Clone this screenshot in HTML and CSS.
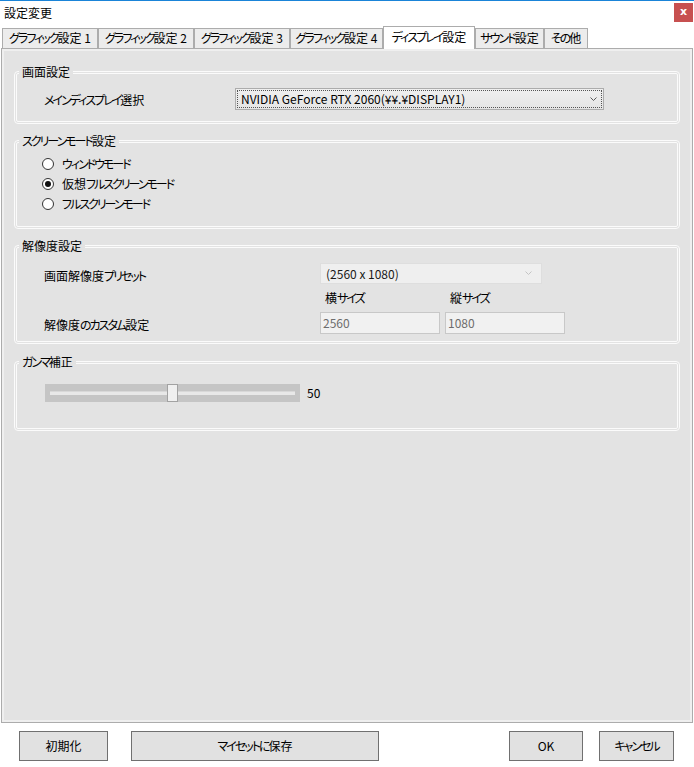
FILE: index.html
```html
<!DOCTYPE html>
<html lang="ja">
<head>
<meta charset="utf-8">
<title>設定変更</title>
<link rel="stylesheet" href="styles.css">
</head>
<body>
<div class="window">
  <div class="titlebar">
    <span class="title">設定変更</span>
    <span class="close">x</span>
  </div>
  <div class="tabs">
    <div class="tab w1"><span class="k">グラフィック</span>設定 1</div>
    <div class="tab w1"><span class="k">グラフィック</span>設定 2</div>
    <div class="tab w1"><span class="k">グラフィック</span>設定 3</div>
    <div class="tab w4"><span class="k">グラフィック</span>設定 4</div>
    <div class="tab active"><span class="k">ディスプレイ</span>設定</div>
    <div class="tab w6"><span class="k">サウンド</span>設定</div>
    <div class="tab w7"><span class="k">その</span>他</div>
  </div>
  <div class="panel">
    <fieldset class="group">
      <legend>画面設定</legend>
      <div class="body b1">
        <span class="label l1"><span class="k">メインディスプレイ</span>選択</span>
        <div class="select focus">
          <span class="focusring">NVIDIA GeForce RTX 2060(¥¥.¥DISPLAY1)</span>
          <svg class="chev" width="7" height="4" viewBox="0 0 7 4"><polyline points="0.5,0.5 3.5,3.5 6.5,0.5" fill="none" stroke="#5a5a5a" stroke-width="1"/></svg>
        </div>
      </div>
    </fieldset>
    <fieldset class="group g2">
      <legend><span class="k">スクリーンモード</span>設定</legend>
      <div class="body b2">
        <div class="radio"><span class="dot"></span><span class="k">ウィンドウモード</span></div>
        <div class="radio"><span class="dot checked"></span><span>仮想<span class="k">フルスクリーンモード</span></span></div>
        <div class="radio"><span class="dot"></span><span class="k">フルスクリーンモード</span></div>
      </div>
    </fieldset>
    <fieldset class="group g3">
      <legend>解像度設定</legend>
      <div class="body b3">
        <span class="label r1">画面解像度<span class="k">プリセット</span></span>
        <div class="select disabled">
          <span class="seltext">(2560 x 1080)</span>
          <svg class="chev" width="7" height="4" viewBox="0 0 7 4"><polyline points="0.5,0.5 3.5,3.5 6.5,0.5" fill="none" stroke="#c4c4c4" stroke-width="1"/></svg>
        </div>
        <span class="sizelabel c2">横<span class="k">サイズ</span></span>
        <span class="sizelabel c3">縦<span class="k">サイズ</span></span>
        <span class="label r3">解像度<span class="k">のカスタム</span>設定</span>
        <div class="input c2">2560</div>
        <div class="input c3">1080</div>
      </div>
    </fieldset>
    <fieldset class="group g4">
      <legend><span class="k">ガンマ</span>補正</legend>
      <div class="body b4">
        <div class="slider">
          <div class="track"></div>
          <div class="thumb"></div>
        </div>
        <span class="value">50</span>
      </div>
    </fieldset>
  </div>
  <div class="footer">
    <div class="btn init">初期化</div>
    <div class="btn save"><span class="k">マイセットに</span>保存</div>
    <div class="spacer"></div>
    <div class="btn ok">OK</div>
    <div class="btn cancel"><span class="k">キャンセル</span></div>
  </div>
</div>
</body>
</html>
```
FILE: styles.css
```css
* { box-sizing: border-box; }
html, body { margin: 0; padding: 0; background: #ffffff; }
body {
  font-family: "Noto Sans CJK JP", "Noto Sans", sans-serif;
  font-size: 12px;
  color: #000;
  font-feature-settings: "palt" 1;
}
.k { letter-spacing: -2px; }
.window {
  width: 694px;
  height: 767px;
  display: flex;
  flex-direction: column;
  background: #ffffff;
}
.titlebar {
  height: 26px;
  border-top: 1px solid #1a84d8;
  display: flex;
  align-items: center;
  justify-content: space-between;
  padding-left: 4px;
}
.title { font-size: 12px; line-height: 16px; margin-top: -2px; }
.close {
  align-self: flex-start;
  margin-top: 2px;
  margin-right: 1px;
  width: 19px;
  height: 19px;
  background: #c75050;
  color: #fff;
  font-family: "DejaVu Sans", sans-serif;
  font-weight: bold;
  font-size: 11px;
  line-height: 17px;
  text-align: center;
}
.tabs {
  height: 22px;
  display: flex;
  align-items: flex-end;
  padding-left: 2px;
}
.tab {
  height: 20px;
  border: 1px solid #acacac;
  border-bottom: none;
  background: #ececec;
  text-align: center;
  line-height: 18px;
  white-space: nowrap;
  font-size: 12px;
}
.w1 { width: 96px; }
.w4 { width: 93px; }
.w6 { width: 69px; }
.w7 { width: 44px; }
.tab.active {
  width: 92px;
  height: 23px;
  margin-bottom: -1px;
  background: #ffffff;
  position: relative;
  z-index: 1;
  line-height: 19px;
}
.panel {
  margin-left: 1px;
  width: 692px;
  height: 675px;
  border: 1px solid #acacac;
  background: #e3e3e3;
  box-shadow: inset 0 0 0 2px #efefef;
  padding: 15px 12px 0 12px;
  display: flex;
  flex-direction: column;
  gap: 9px;
}
.group {
  margin: 0;
  padding: 0;
  min-width: 0;
  border: 3px double #fbfbfb;
  border-radius: 4px;
}
.group legend {
  margin-left: 2px;
  padding: 0 3px;
  line-height: 16px;
  font-size: 12px;
}
.g4 { margin-top: 1px; }
.label { white-space: nowrap; }
.b1 {
  padding: 8px 0 11px 27px;
  display: flex;
  align-items: center;
}
.l1 { width: 191px; padding-top: 2px; line-height: 16px; }
.select {
  height: 22px;
  display: flex;
  align-items: center;
  position: relative;
}
.select.focus {
  width: 369px;
  border: 1px solid #acacac;
  background: linear-gradient(#efefef, #e5e5e5);
  padding: 1px;
}
.focusring {
  flex: 1;
  height: 100%;
  border: 1px dotted #555;
  padding-left: 3px;
  line-height: 16px;
  font-size: 12px;
}
.chev { position: absolute; right: 6px; top: 8px; }
.b2 { padding: 5px 0 12px 25px; }
.radio {
  height: 20px;
  display: flex;
  align-items: center;
  gap: 8px;
  line-height: 16px;
}
.dot {
  width: 12px;
  height: 12px;
  border: 1px solid #333;
  border-radius: 50%;
  background: #fff;
  display: flex;
  align-items: center;
  justify-content: center;
}
.dot.checked::after {
  content: "";
  width: 6px;
  height: 6px;
  border-radius: 50%;
  background: #111;
}
.b3 {
  padding: 9px 0 7px 27px;
  display: grid;
  grid-template-columns: 271px 120px 120px;
  grid-template-rows: 21px 28px 22px;
  column-gap: 5px;
  line-height: 16px;
}
.r1 { grid-row: 1; grid-column: 1; align-self: end; }
.select.disabled {
  grid-row: 1;
  grid-column: 2 / span 2;
  width: 222px;
  height: 21px;
  background: #efefef;
  border: 1px solid #dedede;
}
.seltext { padding-left: 5px; color: #1a1a1a; }
.select.disabled .chev { top: 7px; right: 9px; }
.sizelabel { padding-left: 5px; align-self: center; grid-row: 2; }
.c2 { grid-column: 2; }
.c3 { grid-column: 3; }
.r3 { grid-column: 1; grid-row: 3; align-self: center; padding-top: 3px; }
.input {
  grid-row: 3;
  height: 22px;
  border: 1px solid #c8c8c8;
  background: #f1f1f1;
  color: #6d6d6d;
  padding-left: 2px;
  line-height: 19px;
}
.b4 {
  padding: 14px 0 26px 28px;
  display: flex;
  align-items: center;
}
.slider {
  width: 255px;
  height: 18px;
  background: #c5c5c5;
  position: relative;
  display: flex;
  align-items: center;
  padding: 0 5px;
}
.track {
  flex: 1;
  height: 4px;
  background: #e8e8e8;
  border-top: 1px solid #d8d8d8;
}
.thumb {
  position: absolute;
  left: 122px;
  top: 0;
  width: 11px;
  height: 18px;
  background: #f0f0f0;
  border: 1px solid #a2a2a2;
}
.value { margin-left: 7px; line-height: 16px; }
.footer {
  flex: 1;
  display: flex;
  align-items: flex-start;
  padding: 8px 20px 0 19px;
}
.btn {
  height: 30px;
  border: 1px solid #707070;
  background: #e1e1e1;
  text-align: center;
  line-height: 28px;
  font-size: 12px;
}
.init { width: 89px; }
.save { width: 248px; margin-left: 23px; }
.spacer { flex: 1; }
.ok { width: 74px; }
.cancel { width: 75px; margin-left: 16px; }
```
